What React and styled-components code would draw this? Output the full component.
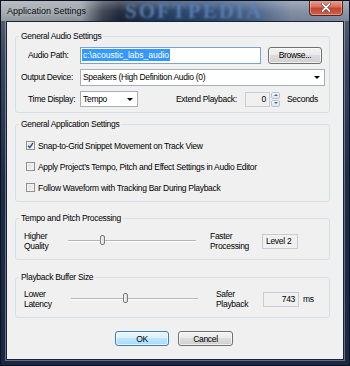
import React from "react";
import styled, { createGlobalStyle } from "styled-components";

const Global = createGlobalStyle`
  html, body { margin: 0; padding: 0; background: #1a2438; }
  * { box-sizing: border-box; }
  body {
    font-family: "Liberation Sans", Arial, sans-serif;
    font-size: 8.5px;
    letter-spacing: -0.3px;
    color: #000;
    white-space: nowrap;
  }
`;

const Window = styled.div`
  width: 350px;
  height: 366px;
  display: flex;
  flex-direction: column;
  border: 1px solid #0b1322;
  background: linear-gradient(to bottom, #5d6674 0px, #3a465e 60px, #1e2b46 180px, #1b2740 366px);
  overflow: hidden;
`;

const TitleBar = styled.div`
  height: 20px;
  flex: none;
  display: flex;
  align-items: center;
  position: relative;
  padding-left: 6px;
  background:
    linear-gradient(to bottom, rgba(255,255,255,0.28), rgba(255,255,255,0.05) 50%, rgba(0,0,0,0.08)),
    linear-gradient(to right, #a3a9b0 0px, #959ca4 80px, #3a4150 102px, #1c2436 118px, #213759 150px, #2a4670 210px, #4a6388 255px, #7d8ba0 290px, #8794a6 350px);
`;

const TitleText = styled.span`
  font-size: 9px;
  letter-spacing: 0;
  color: #0a0a0a;
  text-shadow: 0 0 6px rgba(255,255,255,0.6);
`;

const Watermark = styled.span`
  position: absolute;
  left: 124px;
  top: 0px;
  font-family: "Liberation Serif", "Times New Roman", serif;
  font-weight: bold;
  font-size: 21px;
  letter-spacing: 2px;
  color: #5d84b5;
  opacity: 0.85;
  filter: blur(0.8px);
  line-height: 20px;
`;

const CloseButton = styled.div`
  position: absolute;
  right: 6px;
  top: -1px;
  width: 34px;
  height: 16px;
  border: 1px solid #5a2118;
  border-top: none;
  border-radius: 0 0 4px 4px;
  background: linear-gradient(to bottom, #e8a796 0%, #d7705c 45%, #c3432b 55%, #d2604a 100%);
  display: flex;
  align-items: center;
  justify-content: center;
  box-shadow: inset 0 0 0 1px rgba(255,255,255,0.35);
`;

const FrameBody = styled.div`
  flex: 1;
  display: flex;
  padding: 0 5px 5px 5px;
`;

const Client = styled.div`
  flex: 1;
  background: #f0f0f0;
  border: 1px solid #18223a;
  box-shadow: 0 0 0 1px rgba(190, 200, 215, 0.45);
  display: flex;
  flex-direction: column;
  padding: 9px 13px 0 8px;
`;

const Group = styled.fieldset`
  margin: ${(p) => p.$mt}px 0 0 0;
  padding: 0;
  height: ${(p) => p.$h}px;
  border: 1px solid #d5dfe5;
  border-radius: 3px;
  min-width: 0;
  flex: none;
`;

const Legend = styled.legend`
  line-height: 10px;
  padding: 0 2px;
  margin-left: 3px;
  color: #000;
`;

const GroupInner = styled.div`
  padding: ${(p) => p.$pad};
  display: flex;
  flex-direction: column;
  gap: ${(p) => p.$gap || 0}px;
`;

const FormRow = styled.div`
  display: flex;
  align-items: center;
  height: ${(p) => p.$h}px;
`;

const FieldLabel = styled.span`
  width: ${(p) => p.$w || 64}px;
  flex: none;
  padding-left: ${(p) => p.$indent || 0}px;
`;

const TextInput = styled.div`
  width: 181px;
  height: 17px;
  border: 1px solid #7da2ce;
  background: #fff;
  display: flex;
  align-items: center;
  padding-left: 1px;
`;

const Selected = styled.span`
  background: #3399ff;
  color: #fff;
  line-height: 12px;
  padding: 0 1px;
  letter-spacing: 0;
`;

const Button = styled.div`
  width: ${(p) => p.$w}px;
  height: ${(p) => p.$hgt || 17}px;
  margin-left: ${(p) => p.$ml || 0}px;
  border: 1px solid ${(p) => (p.$default ? "#3c7fb1" : "#707070")};
  border-radius: 3px;
  background: ${(p) =>
    p.$default
      ? "linear-gradient(to bottom, #eaf6fd 0%, #d9f0fc 45%, #bee6fd 50%, #a7d9f5 100%)"
      : "linear-gradient(to bottom, #f2f2f2 0%, #ebebeb 45%, #dddddd 50%, #cfcfcf 100%)"};
  box-shadow: inset 0 0 0 1px rgba(255,255,255,0.7);
  display: flex;
  align-items: center;
  justify-content: center;
  flex: none;
`;

const Select = styled.div`
  width: ${(p) => p.$w}px;
  height: ${(p) => p.$hgt}px;
  border: 1px solid #a9aeb6;
  background: #fff;
  display: flex;
  align-items: center;
  justify-content: space-between;
  padding: 0 4px 0 2px;
  flex: none;
`;

const Arrow = styled.span`
  width: 0;
  height: 0;
  border-left: 3px solid transparent;
  border-right: 3px solid transparent;
  border-top: 3px solid #000;
`;

const Spacer = styled.span`
  width: ${(p) => p.$w}px;
  flex: none;
`;

const ReadBox = styled.div`
  width: ${(p) => p.$w}px;
  height: ${(p) => p.$hgt}px;
  border: 1px solid #c9cdd3;
  background: #f0f0f0;
  display: flex;
  align-items: center;
  justify-content: ${(p) => (p.$right ? "flex-end" : "flex-start")};
  padding: 0 3px;
  flex: none;
`;

const Spin = styled.div`
  width: 9px;
  height: 15px;
  display: flex;
  flex-direction: column;
  gap: 1px;
  margin-left: 1px;
  flex: none;
`;

const SpinHalf = styled.div`
  flex: 1;
  border: 1px solid #b7c3d2;
  border-radius: 2px;
  background: linear-gradient(to bottom, #f4f8fc, #dbe5f0);
  display: flex;
  align-items: center;
  justify-content: center;
`;

const SpinArrow = styled.span`
  width: 0;
  height: 0;
  border-left: 2px solid transparent;
  border-right: 2px solid transparent;
  ${(p) => (p.$up ? "border-bottom: 2px solid #4d6185;" : "border-top: 2px solid #4d6185;")}
`;

const CheckRow = styled.label`
  display: flex;
  align-items: center;
  height: 21px;
  gap: 3px;
`;

const Box = styled.span`
  width: 9px;
  height: 9px;
  border: 1px solid #8e8f8f;
  background: linear-gradient(135deg, #dcdcdc, #f6f6f6);
  box-shadow: inset 0 0 0 1px #f4f4f4;
  display: flex;
  align-items: center;
  justify-content: center;
  flex: none;
`;

const SliderRow = styled.div`
  display: grid;
  grid-template-columns: ${(p) => p.$cols};
  align-items: center;
  height: 20px;
`;

const TwoLine = styled.span`
  line-height: 10px;
`;

const Track = styled.div`
  position: relative;
  height: 2px;
  border-top: 1px solid #b5b5b5;
  border-bottom: 1px solid #ffffff;
`;

const Thumb = styled.div`
  position: absolute;
  left: ${(p) => p.$x}px;
  top: -6px;
  width: 5px;
  height: 10px;
  border: 1px solid #7a7a7a;
  border-radius: 2px;
  background: linear-gradient(to right, #f5f5f5, #dcdcdc);
`;

const Unit = styled.span`
  padding-left: 4px;
`;

const ButtonRow = styled.div`
  display: flex;
  justify-content: center;
  gap: 9px;
  margin-top: 13px;
  padding-left: 3px;
`;

export default function App() {
  return (
    <>
      <Global />
      <Window>
        <TitleBar>
          <TitleText>Application Settings</TitleText>
          <Watermark>SOFTPEDIA</Watermark>
          <CloseButton>
            <svg width="10" height="9" viewBox="0 0 10 9">
              <path d="M1.5 1 L8.5 8 M8.5 1 L1.5 8" stroke="#5a2a22" strokeWidth="3" strokeLinecap="round" />
              <path d="M1.5 1 L8.5 8 M8.5 1 L1.5 8" stroke="#ffffff" strokeWidth="1.8" strokeLinecap="round" />
            </svg>
          </CloseButton>
        </TitleBar>
        <FrameBody>
          <Client>
            <Group $mt={0} $h={82}>
              <Legend>General Audio Settings</Legend>
              <GroupInner $pad="5px 4px 0 0" $gap={4}>
                <FormRow $h={18}>
                  <FieldLabel $indent={12}>Audio Path:</FieldLabel>
                  <TextInput>
                    <Selected>c:\acoustic_labs_audio</Selected>
                  </TextInput>
                  <Button $w={54} $ml={7}>Browse...</Button>
                </FormRow>
                <FormRow $h={18}>
                  <FieldLabel $indent={5}>Output Device:</FieldLabel>
                  <Select $w={245} $hgt={17}>
                    <span>Speakers (High Definition Audio (0)</span>
                    <Arrow />
                  </Select>
                </FormRow>
                <FormRow $h={18}>
                  <FieldLabel $indent={12}>Time Display:</FieldLabel>
                  <Select $w={58} $hgt={16}>
                    <span>Tempo</span>
                    <Arrow />
                  </Select>
                  <Spacer $w={38} />
                  <FieldLabel $w={69}>Extend Playback:</FieldLabel>
                  <ReadBox $w={25} $hgt={15} $right>0</ReadBox>
                  <Spin>
                    <SpinHalf><SpinArrow $up /></SpinHalf>
                    <SpinHalf><SpinArrow /></SpinHalf>
                  </Spin>
                  <Spacer $w={7} />
                  <span>Seconds</span>
                </FormRow>
              </GroupInner>
            </Group>

            <Group $mt={6} $h={83}>
              <Legend>General Application Settings</Legend>
              <GroupInner $pad="6px 0 0 10px">
                <CheckRow>
                  <Box>
                    <svg width="7" height="7" viewBox="0 0 7 7">
                      <path d="M1 3.6 L2.8 5.6 L6 0.8" fill="none" stroke="#2b4a84" strokeWidth="1.3" />
                    </svg>
                  </Box>
                  <span>Snap-to-Grid Snippet Movement on Track View</span>
                </CheckRow>
                <CheckRow>
                  <Box />
                  <span>Apply Project's Tempo, Pitch and Effect Settings in Audio Editor</span>
                </CheckRow>
                <CheckRow>
                  <Box />
                  <span>Follow Waveform with Tracking Bar During Playback</span>
                </CheckRow>
              </GroupInner>
            </Group>

            <Group $mt={11} $h={47}>
              <Legend>Tempo and Pitch Processing</Legend>
              <GroupInner $pad="8px 0 0 8px">
                <SliderRow $cols="44px 128px 14px 52px 36px">
                  <TwoLine>Higher<br />Quality</TwoLine>
                  <Track><Thumb $x={32} /></Track>
                  <span />
                  <TwoLine>Faster<br />Processing</TwoLine>
                  <ReadBox $w={36} $hgt={15}>Level 2</ReadBox>
                </SliderRow>
              </GroupInner>
            </Group>

            <Group $mt={12} $h={46}>
              <Legend>Playback Buffer Size</Legend>
              <GroupInner $pad="7px 0 0 8px">
                <SliderRow $cols="47px 127px 18px 47px 36px auto">
                  <TwoLine>Lower<br />Latency</TwoLine>
                  <Track><Thumb $x={52} /></Track>
                  <span />
                  <TwoLine>Safer<br />Playback</TwoLine>
                  <ReadBox $w={36} $hgt={15} $right>743</ReadBox>
                  <Unit>ms</Unit>
                </SliderRow>
              </GroupInner>
            </Group>

            <ButtonRow>
              <Button $w={54} $hgt={15} $default>OK</Button>
              <Button $w={55} $hgt={15}>Cancel</Button>
            </ButtonRow>
          </Client>
        </FrameBody>
      </Window>
    </>
  );
}
